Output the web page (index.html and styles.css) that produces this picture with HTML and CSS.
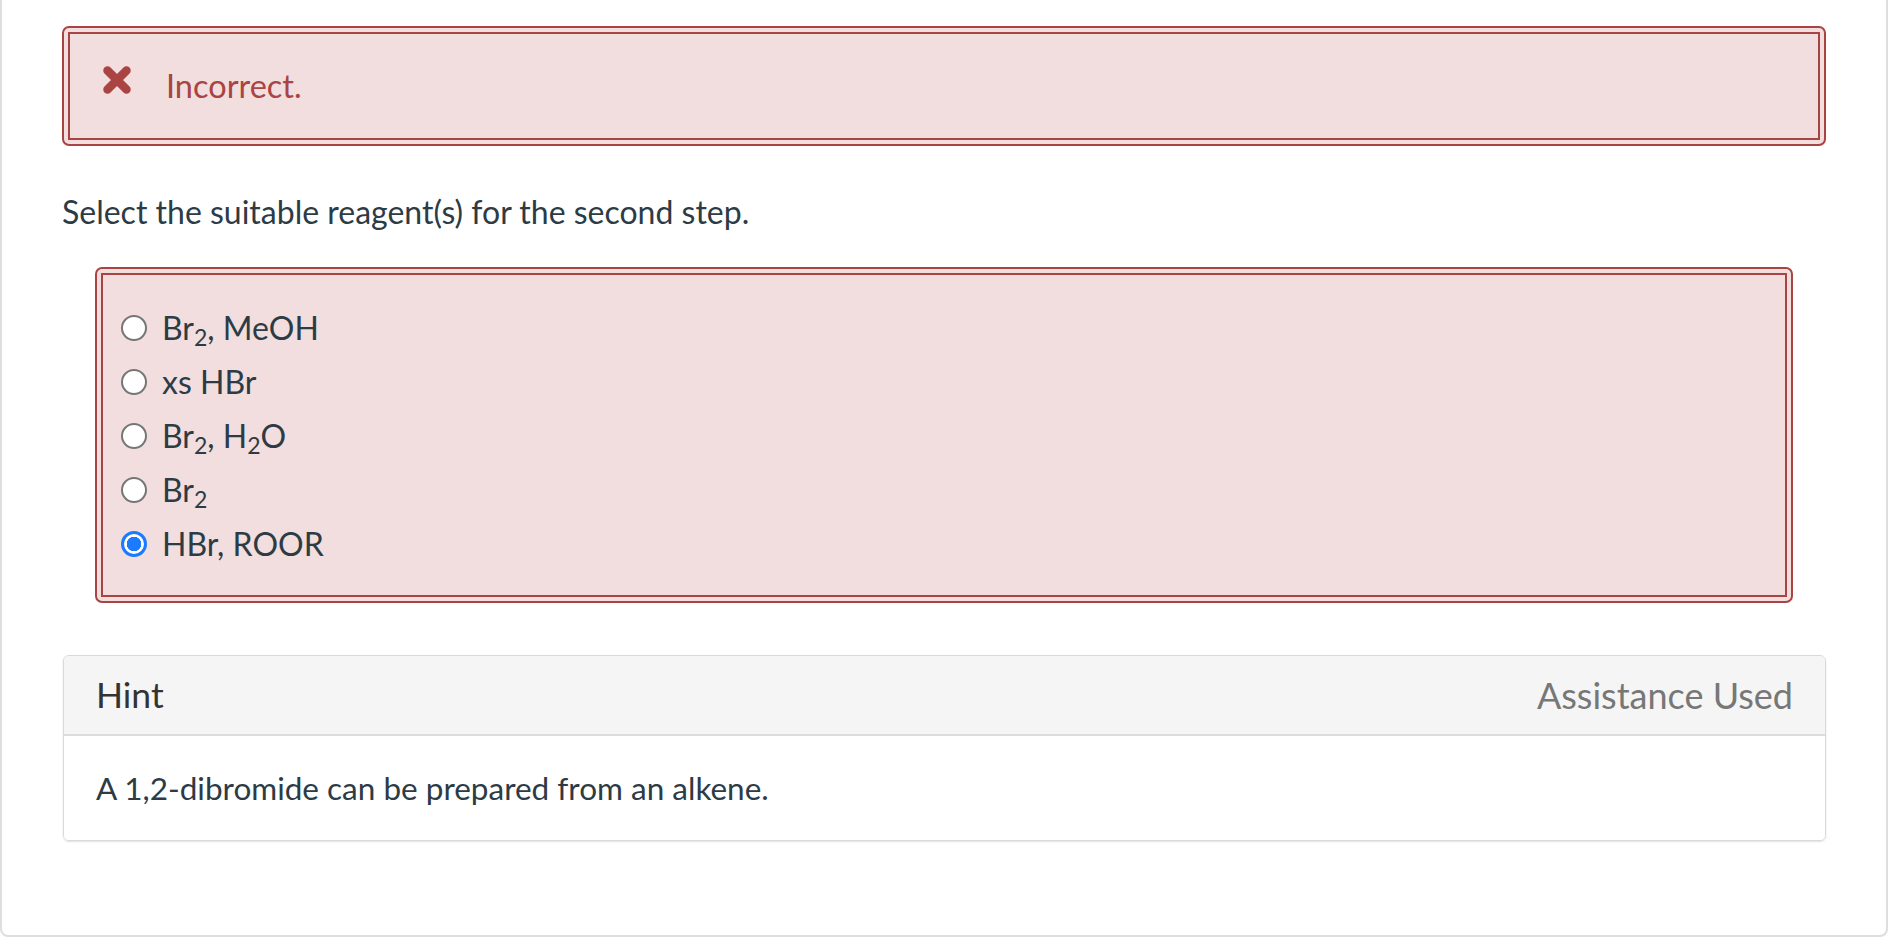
FILE: index.html
```html
<!DOCTYPE html>
<html>
<head>
<meta charset="utf-8">
<link rel="stylesheet" href="styles.css">
</head>
<body>
<div class="panel">
  <div class="alert">
    <div class="alert-inner">
      <svg class="x-icon" width="28" height="28" viewBox="0 0 28 28"><path d="M4.5 4.5 L23.5 23.5 M23.5 4.5 L4.5 23.5" stroke="#a94442" stroke-width="8.5" stroke-linecap="round" fill="none"/></svg>
      <span class="alert-text">Incorrect.</span>
    </div>
  </div>
  <p class="question">Select the suitable reagent(s) for the second step.</p>
  <div class="answers">
    <div class="answers-inner">
      <div class="opt"><span class="radio"></span><span class="label">Br<sub>2</sub>, MeOH</span></div>
      <div class="opt"><span class="radio"></span><span class="label">xs HBr</span></div>
      <div class="opt"><span class="radio"></span><span class="label">Br<sub>2</sub>, H<sub>2</sub>O</span></div>
      <div class="opt"><span class="radio"></span><span class="label">Br<sub>2</sub></span></div>
      <div class="opt"><span class="radio checked"></span><span class="label">HBr, ROOR</span></div>
    </div>
  </div>
  <div class="hint">
    <div class="hint-head"><span class="hint-title">Hint</span><span class="hint-used">Assistance Used</span></div>
    <div class="hint-body">A 1,2-dibromide can be prepared from an alkene.</div>
  </div>
</div>
</body>
</html>
```
FILE: styles.css
```css
html, body { margin: 0; padding: 0; background: #fff; }
body { font-family: Lato, "Noto Sans", sans-serif; color: #2d3b45; width: 1892px; height: 946px; overflow: hidden; }
.panel {
  width: 1888px;
  height: 937px;
  box-sizing: border-box;
  border: 2px solid #dedede;
  border-top: none;
  border-radius: 0 0 8px 8px;
  padding: 26px 60px 0 60px;
  background: #fff;
}
.alert {
  border: 2px solid #a94442;
  border-radius: 7px;
  padding: 4px;
  background: #f2dede;
}
.alert-inner {
  border: 2px solid #a94442;
  display: flex;
  align-items: flex-start;
  padding: 0 33px;
  height: 104px;
}
.x-icon { margin-top: 32px; flex: none; }
.alert-text {
  margin-left: 35px;
  font-size: 32.5px;
  line-height: 104px;
  color: #a94442;
}
.question {
  margin: 41px 0 30px 0;
  font-size: 32px;
  line-height: 50px;
}
.answers {
  margin: 0 33px;
  border: 2px solid #a94442;
  border-radius: 7px;
  padding: 4px;
  background: #f2dede;
}
.answers-inner {
  border: 2px solid #a94442;
  padding: 26px 18px 24px 18px;
}
.opt {
  display: flex;
  align-items: center;
  height: 54px;
  font-size: 32px;
  line-height: 54px;
}
.radio {
  width: 26px;
  height: 26px;
  box-sizing: border-box;
  border: 2px solid #767676;
  border-radius: 50%;
  background: #fff;
  flex: none;
  margin-right: 15px;
}
.radio.checked {
  border: 3px solid #1a7bff;
  background: radial-gradient(circle, #1a7bff 0 7px, #fff 7.5px);
}
sub { font-size: 0.72em; line-height: 0; vertical-align: -0.28em; }
.hint {
  margin-top: 52px;
  margin-left: 1px;
  border: 1px solid #d9d9d9;
  border-radius: 6px;
  box-shadow: 0 1px 2px rgba(0,0,0,0.12);
  overflow: hidden;
}
.hint-head {
  display: flex;
  justify-content: space-between;
  background: #f5f5f5;
  border-bottom: 2px solid #dcdcdc;
  padding: 0 32px;
  height: 78px;
  line-height: 78px;
  font-size: 36px;
}
.hint-title { color: #333; font-size: 35.5px; }
.hint-used { color: #777; }
.hint-body {
  padding: 0 32px;
  font-size: 31.5px;
  line-height: 104px;
  background: #fff;
}
```
